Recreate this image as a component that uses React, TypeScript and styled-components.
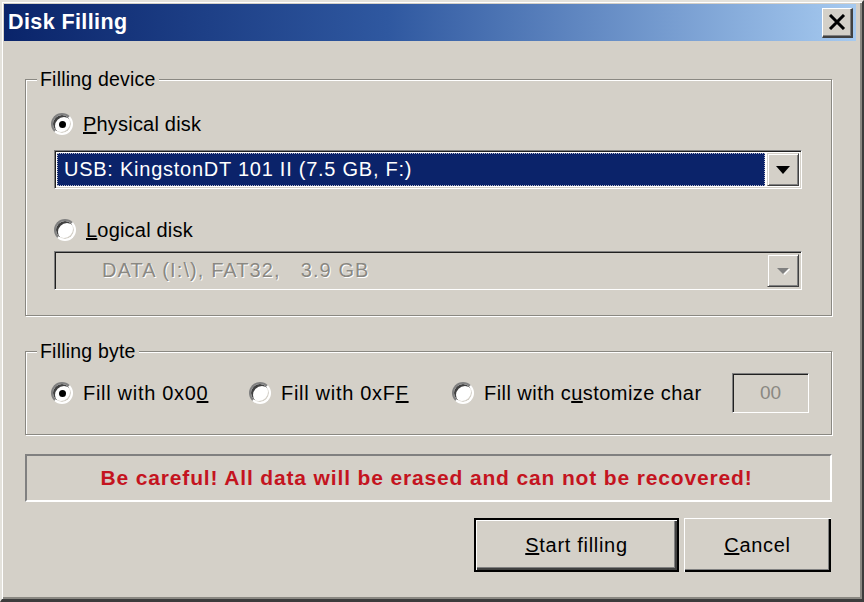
import React from "react";
import styled, { createGlobalStyle } from "styled-components";

const Global = createGlobalStyle`
  html, body { margin: 0; padding: 0; background: #d4d0c8; }
  body { font-family: "Liberation Sans", Arial, sans-serif; }
`;

const Window = styled.div`
  width: 864px;
  height: 602px;
  box-sizing: border-box;
  background: #d4d0c8;
  border-top: 2px solid #e4e2dc;
  border-left: 2px solid #e4e2dc;
  border-right: 2px solid #3c3c3c;
  border-bottom: 3px solid #3c3c3c;
  box-shadow: inset 1px 1px #ffffff, inset -2px -2px #8a8882;
  padding: 2px 6px 0 2px;
  display: flex;
  flex-direction: column;
  overflow: hidden;
`;

const TitleBar = styled.div`
  height: 37px;
  flex: none;
  background: linear-gradient(to right, #0a246a 0%, #2f58a0 45%, #a6caf0 100%);
  display: flex;
  align-items: center;
  justify-content: space-between;
  padding: 0 3px 0 4px;
`;

const TitleText = styled.span`
  color: #ffffff;
  font-weight: bold;
  font-size: 21.5px;
  letter-spacing: 0.4px;
`;

const CloseButton = styled.div`
  width: 31px;
  height: 30px;
  box-sizing: border-box;
  background: #d4d0c8;
  border-top: 1px solid #ffffff;
  border-left: 1px solid #ffffff;
  border-right: 2px solid #404040;
  border-bottom: 2px solid #404040;
  box-shadow: inset -1px -1px #808080;
  display: flex;
  align-items: center;
  justify-content: center;
`;

const Body = styled.div`
  flex: 1;
  display: flex;
  flex-direction: column;
  padding: 27px 24px 0 21px;
`;

const Group = styled.fieldset<{ $mt?: number; $pt: number; $pb: number }>`
  margin: ${(p) => p.$mt ?? 0}px 0 0 0;
  padding: ${(p) => p.$pt}px 29px ${(p) => p.$pb}px 28px;
  border: 1px solid #8a8882;
  box-shadow: inset 1px 1px #ffffff, 1px 1px #ffffff;
  min-width: 0;
  display: flex;
  flex-direction: column;
`;

const Legend = styled.legend`
  font-size: 19.5px;
  line-height: 22px;
  letter-spacing: 0.2px;
  color: #000;
  padding: 0 3px;
  margin-left: -17px;
  background: #d4d0c8;
  position: relative;
`;

const RadioRow = styled.label<{ $ml?: number; $mt?: number; $ls?: number }>`
  display: flex;
  align-items: center;
  gap: 10px;
  height: 26px;
  margin-left: ${(p) => p.$ml ?? 0}px;
  margin-top: ${(p) => p.$mt ?? 0}px;
  font-size: 20px;
  letter-spacing: ${(p) => p.$ls ?? 0}px;
  color: #000;
`;

const RadioCircle = styled.span<{ $checked?: boolean }>`
  width: 22px;
  height: 22px;
  box-sizing: border-box;
  border-radius: 50%;
  flex: none;
  background: #ffffff;
  border: 2px solid;
  border-color: #808080 #ffffff #ffffff #808080;
  box-shadow: inset 2px 2px #404040, inset -1px -1px #d4d0c8;
  display: flex;
  align-items: center;
  justify-content: center;
  &::after {
    content: "";
    width: 7px;
    height: 7px;
    border-radius: 50%;
    background: ${(p) => (p.$checked ? "#000" : "transparent")};
    margin: 1px 0 0 1px;
  }
`;

const Combo = styled.div<{ $mt: number; $disabled?: boolean }>`
  margin-top: ${(p) => p.$mt}px;
  height: 39px;
  box-sizing: border-box;
  border-top: 1px solid #808080;
  border-left: 1px solid #808080;
  border-right: 1px solid #ffffff;
  border-bottom: 1px solid #ffffff;
  box-shadow: inset 1px 1px #202020, inset -1px -1px #d4d0c8;
  background: ${(p) => (p.$disabled ? "#d4d0c8" : "#ffffff")};
  display: flex;
  align-items: stretch;
  padding: 2px;
  gap: 2px;
`;

const ComboValue = styled.div<{ $selected?: boolean; $disabled?: boolean }>`
  flex: 1;
  display: flex;
  align-items: center;
  font-size: 20px;
  letter-spacing: ${(p) => (p.$disabled ? 1.1 : 0.75)}px;
  padding-left: ${(p) => (p.$disabled ? 45 : 7)}px;
  background: ${(p) => (p.$selected ? "#0b236a" : "transparent")};
  color: ${(p) => (p.$selected ? "#ffffff" : p.$disabled ? "#8a8882" : "#000")};
  text-shadow: ${(p) => (p.$disabled ? "1px 1px #ffffff" : "none")};
  outline: ${(p) => (p.$selected ? "1px dotted #b8b8c8" : "none")};
  outline-offset: -1px;
  white-space: pre;
`;

const DropButton = styled.div`
  width: 32px;
  flex: none;
  box-sizing: border-box;
  background: #d4d0c8;
  border-top: 1px solid #d4d0c8;
  border-left: 1px solid #d4d0c8;
  border-right: 1px solid #404040;
  border-bottom: 1px solid #404040;
  box-shadow: inset 1px 1px #ffffff, inset -1px -1px #808080;
  display: flex;
  align-items: center;
  justify-content: center;
`;

const ByteRow = styled.div`
  display: flex;
  align-items: center;
  height: 40px;
  margin-left: -3px;
`;

const ByteOption = styled.div<{ $w: number }>`
  width: ${(p) => p.$w}px;
  flex: none;
  display: flex;
  align-items: center;
`;

const CharBox = styled.div`
  width: 77px;
  height: 40px;
  flex: none;
  box-sizing: border-box;
  border-top: 1px solid #808080;
  border-left: 1px solid #808080;
  border-right: 1px solid #ffffff;
  border-bottom: 1px solid #ffffff;
  box-shadow: inset 1px 1px #202020, inset -1px -1px #d4d0c8;
  background: #d4d0c8;
  display: flex;
  align-items: center;
  justify-content: center;
  font-size: 19px;
  color: #8a8882;
`;

const Warning = styled.div`
  margin-top: 19px;
  height: 48px;
  box-sizing: border-box;
  border-top: 2px solid #808080;
  border-left: 2px solid #808080;
  border-right: 2px solid #ffffff;
  border-bottom: 2px solid #ffffff;
  display: flex;
  align-items: center;
  justify-content: center;
  color: #c4141f;
  font-weight: bold;
  font-size: 21px;
  letter-spacing: 0.85px;
  padding-right: 4px;
`;

const ButtonRow = styled.div`
  margin-top: 16px;
  display: flex;
  justify-content: flex-end;
  gap: 5px;
  padding-right: 1px;
`;

const Button = styled.div<{ $w: number; $default?: boolean }>`
  width: ${(p) => p.$w}px;
  height: 54px;
  box-sizing: border-box;
  background: #d4d0c8;
  border: ${(p) => (p.$default ? "2px solid #000" : "none")};
  box-shadow: ${(p) =>
    p.$default
      ? "inset 1px 1px #ffffff, inset -2px -2px #404040, inset -3px -3px #808080"
      : "inset 1px 1px #ffffff, inset -2px -2px #000000, inset -3px -3px #808080"};
  display: flex;
  align-items: center;
  justify-content: center;
  font-size: 20px;
  letter-spacing: 0.7px;
  color: #000;
`;

const Radio = ({
  checked,
  children,
  ml,
  mt,
  ls,
}: {
  checked?: boolean;
  children: React.ReactNode;
  ml?: number;
  mt?: number;
  ls?: number;
}) => (
  <RadioRow $ml={ml} $mt={mt} $ls={ls}>
    <RadioCircle $checked={checked} />
    <span>{children}</span>
  </RadioRow>
);

const Arrow = ({ disabled }: { disabled?: boolean }) => (
  <svg width="14" height="8" viewBox="0 0 14 8">
    {disabled ? (
      <>
        <path d="M1 1 H13 L7 7 Z" fill="#808080" />
        <path d="M8 7.5 L13.5 2" stroke="#ffffff" strokeWidth="1.5" />
      </>
    ) : (
      <path d="M0 0 H14 L7 8 Z" fill="#000" />
    )}
  </svg>
);

export default function App() {
  return (
    <>
      <Global />
      <Window>
        <TitleBar>
          <TitleText>Disk Filling</TitleText>
          <CloseButton>
            <svg width="18" height="16" viewBox="0 0 18 16">
              <path d="M2 1 L16 15 M16 1 L2 15" stroke="#000" strokeWidth="3" />
            </svg>
          </CloseButton>
        </TitleBar>
        <Body>
          <Group $pt={21} $pb={25}>
            <Legend>Filling device</Legend>
            <Radio checked ml={-3} ls={0.2}>
              <u>P</u>hysical disk
            </Radio>
            <Combo $mt={13}>
              <ComboValue $selected>USB: KingstonDT 101 II (7.5 GB, F:)</ComboValue>
              <DropButton>
                <Arrow />
              </DropButton>
            </Combo>
            <Radio mt={28} ls={0.2}>
              <u>L</u>ogical disk
            </Radio>
            <Combo $mt={8} $disabled>
              <ComboValue $disabled>{"DATA (I:\\), FAT32,   3.9 GB"}</ComboValue>
              <DropButton>
                <Arrow disabled />
              </DropButton>
            </Combo>
          </Group>
          <Group $mt={24} $pt={11} $pb={21}>
            <Legend>Filling byte</Legend>
            <ByteRow>
              <ByteOption $w={198}>
                <Radio checked ls={0.7}>
                  Fill with 0x0<u>0</u>
                </Radio>
              </ByteOption>
              <ByteOption $w={203}>
                <Radio ls={0.7}>
                  Fill with 0xF<u>F</u>
                </Radio>
              </ByteOption>
              <ByteOption $w={280}>
                <Radio ls={0.45}>
                  Fill with c<u>u</u>stomize char
                </Radio>
              </ByteOption>
              <CharBox>00</CharBox>
            </ByteRow>
          </Group>
          <Warning>Be careful! All data will be erased and can not be recovered!</Warning>
          <ButtonRow>
            <Button $w={205} $default>
              <span>
                <u>S</u>tart filling
              </span>
            </Button>
            <Button $w={147}>
              <span>
                <u>C</u>ancel
              </span>
            </Button>
          </ButtonRow>
        </Body>
      </Window>
    </>
  );
}
